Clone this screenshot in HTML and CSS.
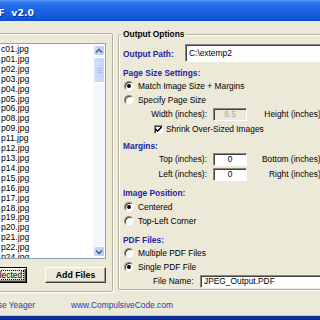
FILE: index.html
```html
<!DOCTYPE html>
<html>
<head>
<meta charset="utf-8">
<title>JPEG to PDF v2.0</title>
<link rel="stylesheet" href="styles.css">
</head>
<body>
<div class="window">
  <div class="titlebar">
    <div class="title-clip"><span class="title">JPEG to PDF&nbsp;&nbsp;v2.0</span></div>
  </div>
  <div class="main">
    <div class="files">
      <div class="listbox">
        <ul class="items">
          <li>c01.jpg</li><li>p01.jpg</li><li>p02.jpg</li><li>p03.jpg</li><li>p04.jpg</li>
          <li>p05.jpg</li><li>p06.jpg</li><li>p08.jpg</li><li>p09.jpg</li><li>p11.jpg</li>
          <li>p12.jpg</li><li>p13.jpg</li><li>p14.jpg</li><li>p15.jpg</li><li>p16.jpg</li>
          <li>p17.jpg</li><li>p18.jpg</li><li>p19.jpg</li><li>p20.jpg</li><li>p21.jpg</li>
          <li>p22.jpg</li><li>p24.jpg</li>
        </ul>
        <div class="vscroll">
          <div class="sbtn"><svg width="8" height="6" viewBox="0 0 8 6"><polyline points="1,4.5 4,1.5 7,4.5" fill="none" stroke="#4d6185" stroke-width="1.6"/></svg></div>
          <div class="thumb"><i></i><i></i><i></i></div>
          <div class="track"></div>
          <div class="sbtn"><svg width="8" height="6" viewBox="0 0 8 6"><polyline points="1,1.5 4,4.5 7,1.5" fill="none" stroke="#4d6185" stroke-width="1.6"/></svg></div>
        </div>
      </div>
      <div class="btnrow">
        <button class="btn btn-default"><span class="focus">Remove Selected</span></button>
        <button class="btn btn-add">Add Files</button>
      </div>
    </div>

    <fieldset class="options">
      <legend>Output Options</legend>

      <div class="path-row">
        <span class="label-blue path-label">Output Path:</span>
        <span class="field field-path">C:\extemp2</span>
      </div>

      <div class="heading h-page">Page Size Settings:</div>
      <div class="opt"><span class="radio on"></span>Match Image Size + Margins</div>
      <div class="opt"><span class="radio"></span>Specify Page Size</div>
      <div class="dim">
        <span class="dlabel">Width (inches):</span><span class="field small disabled">8.5</span>
        <span class="dlabel2">Height (inches):</span><span class="field small disabled">11</span>
      </div>
      <div class="check-row"><span class="check"><svg width="7" height="7" viewBox="0 0 7 7"><polyline points="0.5,3 2.5,5.2 6.5,1" fill="none" stroke="#000" stroke-width="1.6"/></svg></span>Shrink Over-Sized Images</div>

      <div class="heading h-margins">Margins:</div>
      <div class="dim">
        <span class="dlabel">Top (inches):</span><span class="field small">0</span>
        <span class="dlabel2">Bottom (inches):</span><span class="field small">0</span>
      </div>
      <div class="dim dim2">
        <span class="dlabel">Left (inches):</span><span class="field small">0</span>
        <span class="dlabel2">Right (inches):</span><span class="field small">0</span>
      </div>

      <div class="heading h-pos">Image Position:</div>
      <div class="opt first"><span class="radio on"></span>Centered</div>
      <div class="opt"><span class="radio"></span>Top-Left Corner</div>

      <div class="heading h-pdf">PDF Files:</div>
      <div class="opt"><span class="radio"></span>Multiple PDF Files</div>
      <div class="opt"><span class="radio on"></span>Single PDF File</div>
      <div class="file-row">
        <span class="file-label">File Name:</span>
        <span class="field field-file">JPEG_Output.PDF</span>
      </div>
    </fieldset>
  </div>

  <div class="status">
    <div class="author-clip"><span class="link">Jesse Yeager</span></div>
    <span class="link site">www.CompulsiveCode.com</span>
  </div>
  <div class="frame-bottom"></div>
</div>
</body>
</html>
```

FILE: styles.css
```css
* { box-sizing: border-box; }

html, body {
  margin: 0;
  padding: 0;
}

body {
  width: 320px;
  height: 320px;
  overflow: hidden;
  background: #ece9d8;
  font-family: "Liberation Sans", Arial, sans-serif;
  font-size: 8.4px;
  color: #000;
}

.window {
  width: 320px;
  height: 320px;
  display: flex;
  flex-direction: column;
  overflow: hidden;
}

/* Title bar */
.titlebar {
  height: 21px;
  flex-shrink: 0;
  background: linear-gradient(#5496f6 0%, #2f78ee 12%, #1f68e6 35%, #175fe0 65%, #1258d8 85%, #0b4cc6 100%);
  display: flex;
  align-items: center;
  padding-top: 4px;
}

.title-clip {
  width: 34px;
  display: flex;
  justify-content: flex-end;
  white-space: nowrap;
}

.title {
  color: #fff;
  font-family: "DejaVu Sans", sans-serif;
  font-weight: bold;
  font-size: 9.4px;
  text-shadow: 1px 1px 0 #0c2d9c;
}

/* Main area */
.main {
  height: 271px;
  flex-shrink: 0;
  display: flex;
  align-items: flex-start;
}

.files {
  margin-left: -60px;
  margin-top: 12px;
  width: 173px;
  height: 259px;
  flex-shrink: 0;
  border: 1px solid #b5b2a4;
  box-shadow: 1px 1px 0 #fff, inset 1px 1px 0 #fff;
  border-radius: 2px;
  padding: 9px 6px 0 0;
}

.listbox {
  height: 216px;
  border: 1px solid #8f9fb5;
  background: #fff;
  display: flex;
}

.items {
  list-style: none;
  margin: 0;
  padding: 1px 0 0 59px;
  flex: 1;
  overflow: hidden;
  line-height: 9.9px;
  font-size: 8.6px;
  white-space: nowrap;
}

.vscroll {
  width: 12px;
  flex-shrink: 0;
  display: flex;
  flex-direction: column;
  background: #f5f6fb;
  padding: 1px 0;
}

.sbtn {
  height: 11px;
  border: 1px solid #fff;
  border-radius: 2px;
  background: linear-gradient(90deg, #cbdafc, #b8ccf8);
  display: flex;
  align-items: center;
  justify-content: center;
}

.thumb {
  height: 26px;
  margin-top: 1px;
  border: 1px solid #fff;
  border-radius: 2px;
  background: linear-gradient(90deg, #d3e0fd, #c2d3fa);
  display: flex;
  flex-direction: column;
  align-items: center;
  justify-content: center;
  gap: 1px;
}

.thumb i {
  display: block;
  width: 5px;
  height: 1px;
  background: #a9bdea;
}

.track {
  flex: 1;
}

.btnrow {
  margin-top: 8px;
  height: 16px;
  display: flex;
  justify-content: flex-end;
  gap: 18px;
}

.btn {
  height: 16px;
  margin: 0;
  padding: 0;
  font-family: "Liberation Sans", Arial, sans-serif;
  font-size: 8.4px;
  color: #000;
  background: #ece9d8;
  border: 1px solid;
  border-color: #fff #404040 #404040 #fff;
  box-shadow: inset -1px -1px 0 #9d9a8c;
  flex-shrink: 0;
}

.btn-add {
  width: 61px;
  font-weight: bold;
  font-size: 8.8px;
}

.btn-default {
  width: 76px;
  border: 1px solid #000;
  box-shadow: inset 1px 1px 0 #fff, inset -1px -1px 0 #404040, inset -2px -2px 0 #9d9a8c;
  padding: 2px;
}

.btn-default .focus {
  display: block;
  height: 10px;
  line-height: 9px;
  border: 1px dotted #000;
}

/* Options group */
.options {
  margin: 7px 0 0 5px;
  width: 232px;
  flex-shrink: 0;
  border: 1px solid #b5b2a4;
  box-shadow: 1px 1px 0 #fff, inset 1px 1px 0 #fff;
  border-radius: 2px;
  padding: 0 4px 1px 4px;
  min-width: 0;
}

.options legend {
  font-weight: bold;
  line-height: 12px;
  padding: 0 2px;
  margin-left: -2px;
  color: #000;
}

.label-blue,
.heading {
  color: #2424a4;
  font-weight: bold;
}

.path-row {
  margin-top: 4px;
  height: 18px;
  display: flex;
  align-items: center;
}

.path-label {
  width: 62px;
  flex-shrink: 0;
  padding-top: 2px;
}

.field {
  background: #fff;
  border: 1px solid;
  border-color: #8c8a80 #fff #fff #8c8a80;
  box-shadow: inset 1px 1px 0 #404040;
  display: flex;
  align-items: center;
  white-space: nowrap;
}

.field-path {
  height: 18px;
  flex: 1;
  padding-left: 3px;
}

.heading {
  height: 12px;
  line-height: 12px;
}

.h-page { margin-top: 5px; }
.h-margins { margin-top: 4px; }
.h-pos { margin-top: 6px; }
.h-pdf { margin-top: 6px; }

.opt {
  height: 14px;
  display: flex;
  align-items: center;
  padding-left: 1px;
}

.opt.first { margin-top: 1px; }

.radio {
  width: 10px;
  height: 10px;
  margin-right: 4px;
  border-radius: 50%;
  background: #fff;
  border: 1px solid;
  border-color: #8c8a80 #f4f3ee #f4f3ee #8c8a80;
  box-shadow: inset 1px 1px 0 #404040;
  display: flex;
  align-items: center;
  justify-content: center;
  flex-shrink: 0;
}

.radio.on::after {
  content: "";
  width: 4px;
  height: 4px;
  border-radius: 50%;
  background: #000;
}

.dim {
  height: 14px;
  display: grid;
  grid-template-columns: 84px 34px 70px 34px;
  column-gap: 6px;
  align-items: center;
}

.dim2 { margin-top: 1px; }

.dlabel,
.dlabel2 {
  text-align: right;
  white-space: nowrap;
}

.small {
  height: 13px;
  justify-content: center;
}

.small.disabled {
  background: #ece9d8;
  color: #aca899;
}

.check-row {
  margin-top: 1px;
  height: 14px;
  display: flex;
  align-items: center;
  padding-left: 31px;
}

.check {
  width: 9px;
  height: 9px;
  margin-right: 3px;
  background: #fff;
  border: 1px solid;
  border-color: #8c8a80 #f4f3ee #f4f3ee #8c8a80;
  box-shadow: inset 1px 1px 0 #404040;
  display: flex;
  align-items: center;
  justify-content: center;
  flex-shrink: 0;
}

.file-row {
  height: 14px;
  display: flex;
  align-items: center;
  padding-left: 30px;
}

.file-label {
  width: 47px;
  flex-shrink: 0;
}

.field-file {
  height: 13px;
  flex: 1;
  padding-left: 3px;
}

/* Status */
.status {
  height: 22px;
  flex-shrink: 0;
  display: flex;
  align-items: center;
  padding-top: 4px;
}

.author-clip {
  width: 35px;
  display: flex;
  justify-content: flex-end;
  white-space: nowrap;
  flex-shrink: 0;
}

.link {
  color: #2b3aa6;
}

.site {
  margin-left: 36px;
}

.frame-bottom {
  height: 7px;
  flex-shrink: 0;
  background: linear-gradient(#ece9d8 0, #ece9d8 1px, #b9c9ee 1px, #b9c9ee 2px, #0c2f9c 2px, #0a2a8c 100%);
}
```
